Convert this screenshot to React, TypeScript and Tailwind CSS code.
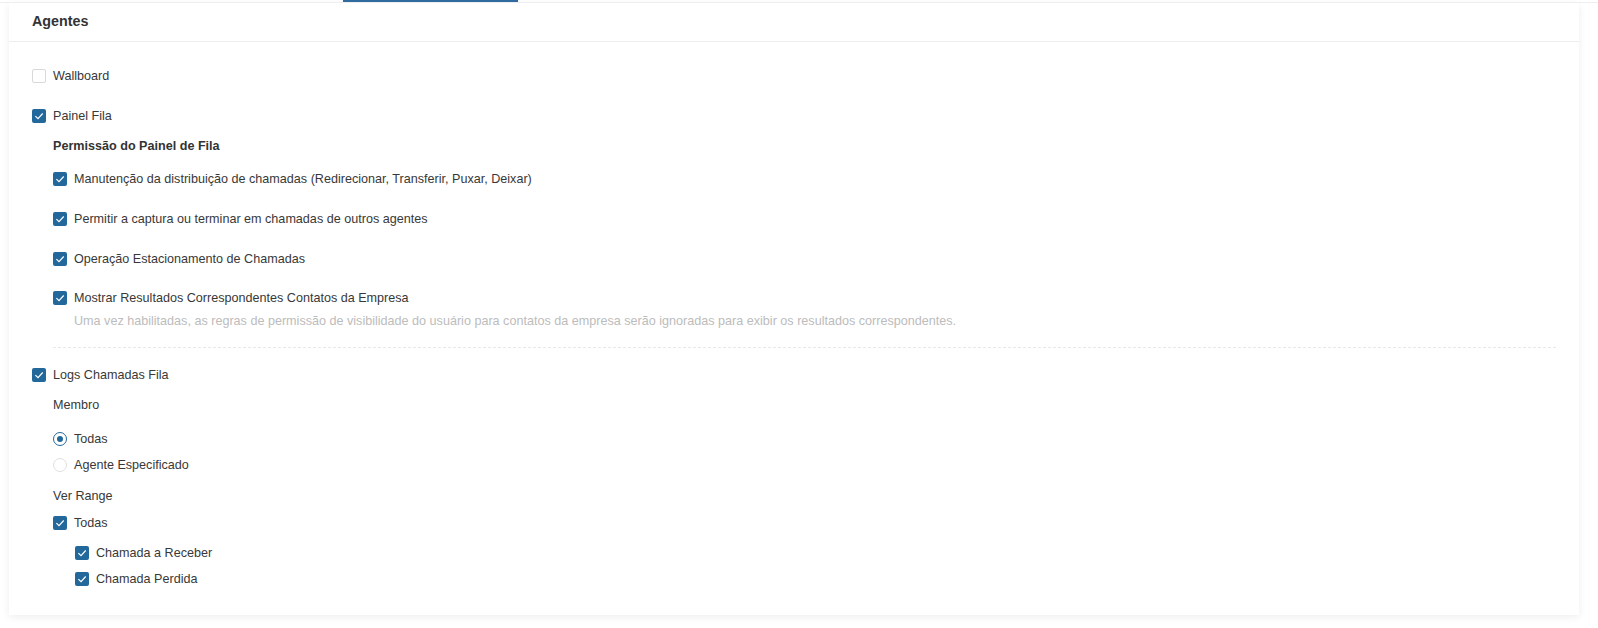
import type { ReactNode } from "react";

const font = { fontFamily: '"Liberation Sans", Arial, sans-serif' };

function Check({ checked }: { checked: boolean }) {
	return checked ? (
		<span className="flex h-[14px] w-[14px] shrink-0 items-center justify-center rounded-[2px] bg-[#23689b]">
			<svg width="14" height="14" viewBox="0 0 14 14" fill="none">
				<path d="M3.4 7.1 6 9.6 10.7 4.5" stroke="white" strokeWidth="1.2" />
			</svg>
		</span>
	) : (
		<span className="h-[14px] w-[14px] shrink-0 rounded-[2px] border border-[#d9d9d9] bg-white" />
	);
}

function Radio({ checked }: { checked: boolean }) {
	return checked ? (
		<span className="flex h-[14px] w-[14px] shrink-0 items-center justify-center rounded-full border border-[#23689b] bg-white">
			<span className="h-[6px] w-[6px] rounded-full bg-[#23689b]" />
		</span>
	) : (
		<span className="h-[14px] w-[14px] shrink-0 rounded-full border border-[#e0e0e0] bg-white" />
	);
}

function Row({
	control,
	children,
	className = "",
}: {
	control: ReactNode;
	children: ReactNode;
	className?: string;
}) {
	return (
		<label className={`flex h-4 items-center gap-[7px] text-[12.6px] leading-4 text-[#383838] ${className}`}>
			{control}
			<span>{children}</span>
		</label>
	);
}

export default function App() {
	return (
		<div className="min-h-[628px] bg-white" style={font}>
			{/* barra de abas acima */}
			<div className="relative h-[3px] border-b border-[#eeeeee]">
				<div className="absolute left-[343px] top-0 h-[2px] w-[175px] bg-[#2f6b9f]" />
			</div>

			<div className="mx-[9px] w-[1570px] bg-white shadow-[0_2px_8px_rgba(0,0,0,0.07)]">
				{/* cabeçalho */}
				<div className="flex h-[39px] items-center border-b border-[#eeeeee] px-[23px]">
					<h2 className="text-[14.3px] font-bold text-[#333]">Agentes</h2>
				</div>

				<div className="px-[23px] pb-[28px] pt-[26px]">
					<Row control={<Check checked={false} />}>Wallboard</Row>
					<Row control={<Check checked />} className="mt-6">
						Painel Fila
					</Row>

					<div className="pl-[21px]">
						<p className="mt-[14px] h-4 text-[12.6px] font-bold leading-4 text-[#333]">
							Permissão do Painel de Fila
						</p>
						<Row control={<Check checked />} className="mt-[17px]">
							Manutenção da distribuição de chamadas (Redirecionar, Transferir, Puxar, Deixar)
						</Row>
						<Row control={<Check checked />} className="mt-6">
							Permitir a captura ou terminar em chamadas de outros agentes
						</Row>
						<Row control={<Check checked />} className="mt-6">
							Operação Estacionamento de Chamadas
						</Row>
						<Row control={<Check checked />} className="mt-[23px]">
							Mostrar Resultados Correspondentes Contatos da Empresa
						</Row>
						<p className="mt-[7px] h-4 pl-[21px] text-[12.6px] leading-4 text-[#bcbcbc]">
							Uma vez habilitadas, as regras de permissão de visibilidade do usuário para contatos da
							empresa serão ignoradas para exibir os resultados correspondentes.
						</p>
						<div className="mt-[18px] border-t border-dashed border-[#e8e8e8]" />
					</div>

					<Row control={<Check checked />} className="mt-[19px]">
						Logs Chamadas Fila
					</Row>
					<div className="pl-[21px]">
						<p className="mt-[14px] h-4 text-[12.6px] leading-4 text-[#383838]">Membro</p>
						<Row control={<Radio checked />} className="mt-[18px]">
							Todas
						</Row>
						<Row control={<Radio checked={false} />} className="mt-[10px]">
							Agente Especificado
						</Row>
						<p className="mt-[15px] h-4 text-[12.6px] leading-4 text-[#383838]">Ver Range</p>
						<Row control={<Check checked />} className="mt-[11px]">
							Todas
						</Row>
						<div className="pl-[22px]">
							<Row control={<Check checked />} className="mt-[14px]">
								Chamada a Receber
							</Row>
							<Row control={<Check checked />} className="mt-[10px]">
								Chamada Perdida
							</Row>
						</div>
					</div>
				</div>
			</div>
		</div>
	);
}
